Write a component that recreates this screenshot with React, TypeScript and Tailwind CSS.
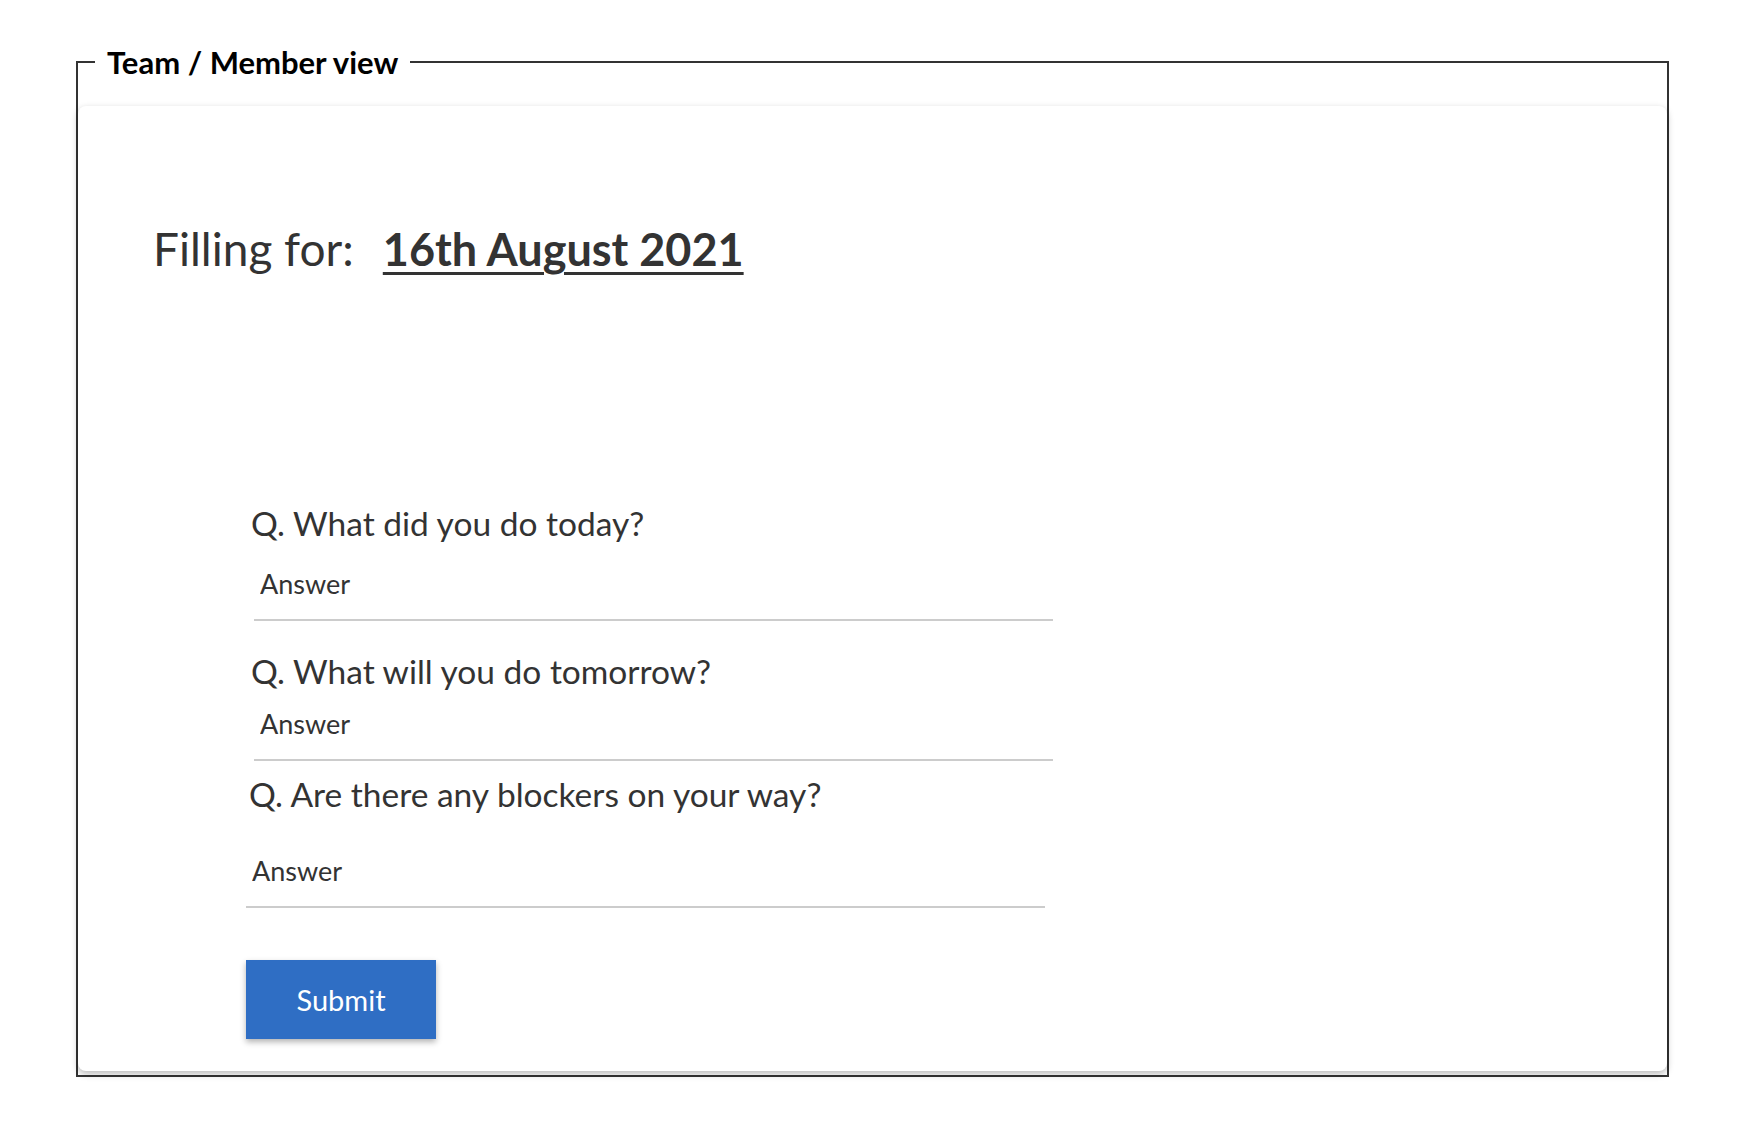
export default function App() {
  const questions = [
    { q: 'Q. What did you do today?', qClass: 'ml-[173px] mt-[0px]', inputClass: 'ml-[176px] w-[799px] mt-[25px]' },
    { q: 'Q. What will you do tomorrow?', qClass: 'ml-[173px] mt-[30px]', inputClass: 'ml-[176px] w-[799px] mt-[17px]' },
    { q: 'Q. Are there any blockers on your way?', qClass: 'ml-[171px] mt-[13px]', inputClass: 'ml-[168px] w-[799px] mt-[41px]' },
  ];

  return (
    <div className="min-h-screen bg-white pt-[44px] text-[#333]" style={{ fontFamily: 'Lato, "Noto Sans", sans-serif' }}>
      {/* Team / Member view frame */}
      <fieldset className="ml-[76px] w-[1593px] border-2 border-[#333] px-0 pb-[4px]">
        <legend className="ml-[17px] px-3 text-[31px] font-bold leading-[36px] text-black">Team / Member view</legend>

        <div className="mt-[26px] rounded-lg bg-white pb-[32px] shadow-[0_3px_7px_rgba(0,0,0,0.28)]">
          {/* Heading */}
          <div className="flex items-baseline pl-[75px] pt-[115px]">
            <span className="text-[46px] leading-[56px]">Filling for:</span>
            <span className="ml-[29px] text-[45px] font-bold leading-[56px] underline decoration-[3px] underline-offset-[6px]">
              16th August 2021
            </span>
          </div>

          {/* Questions */}
          <div className="mt-[226px] flex flex-col">
            {questions.map((item) => (
              <div key={item.q} className="flex flex-col">
                <div className={`${item.qClass} text-[33.5px] leading-[40px]`}>{item.q}</div>
                <input
                  type="text"
                  placeholder="Answer"
                  className={`${item.inputClass} border-b-2 border-[#cccccc] bg-transparent pb-[19px] pl-[6px] text-[27px] leading-[32px] outline-none placeholder:text-[#333]`}
                />
              </div>
            ))}
          </div>

          <button className="ml-[168px] mt-[52px] h-[79px] w-[190px] bg-[#2f6ec4] text-[29px] text-white shadow-[0_3px_6px_rgba(0,0,0,0.3)]">
            Submit
          </button>
        </div>
      </fieldset>
    </div>
  );
}
